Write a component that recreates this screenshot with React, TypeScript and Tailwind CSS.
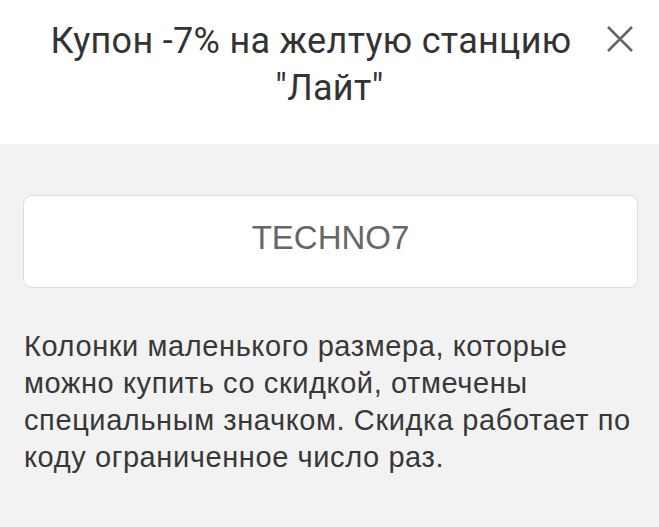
import React from "react";

export default function App() {
  return (
    <div className="w-[659px] h-[527px] bg-[#f2f2f2] overflow-hidden">
      <div className="relative h-[144px] bg-white pt-[18px]">
        <div
          className="text-center text-[36px] leading-[47px] tracking-[0.3px] text-[#333333]"
          style={{ fontFamily: "Roboto, sans-serif" }}
        >
          <div className="whitespace-nowrap pr-[37px]">Купон -7% на желтую станцию</div>
          <div className="whitespace-nowrap">"Лайт"</div>
        </div>
        <button className="absolute left-[606px] top-[25px] w-[28px] h-[28px]">
          <svg width="28" height="28" viewBox="0 0 28 28">
            <path d="M2 2 L26 26 M26 2 L2 26" stroke="#666666" strokeWidth="2.6" strokeLinecap="butt" />
          </svg>
        </button>
      </div>
      <div className="px-[23px] pt-[51px]" style={{ fontFamily: '"Liberation Sans", Arial, sans-serif' }}>
        <div className="w-[615px] h-[93px] rounded-[9px] border border-[#dddddd] bg-white pt-[25px] text-center text-[33px] leading-[33px] text-[#666666]">
          TECHNO7
        </div>
        <div className="mt-[40px] pl-[1px] text-[29px] leading-[37px] tracking-[0.6px] text-[#383838]">
          <div className="whitespace-nowrap">Колонки маленького размера, которые</div>
          <div className="whitespace-nowrap">можно купить со скидкой, отмечены</div>
          <div className="whitespace-nowrap">специальным значком. Скидка работает по</div>
          <div className="whitespace-nowrap">коду ограниченное число раз.</div>
        </div>
      </div>
    </div>
  );
}
